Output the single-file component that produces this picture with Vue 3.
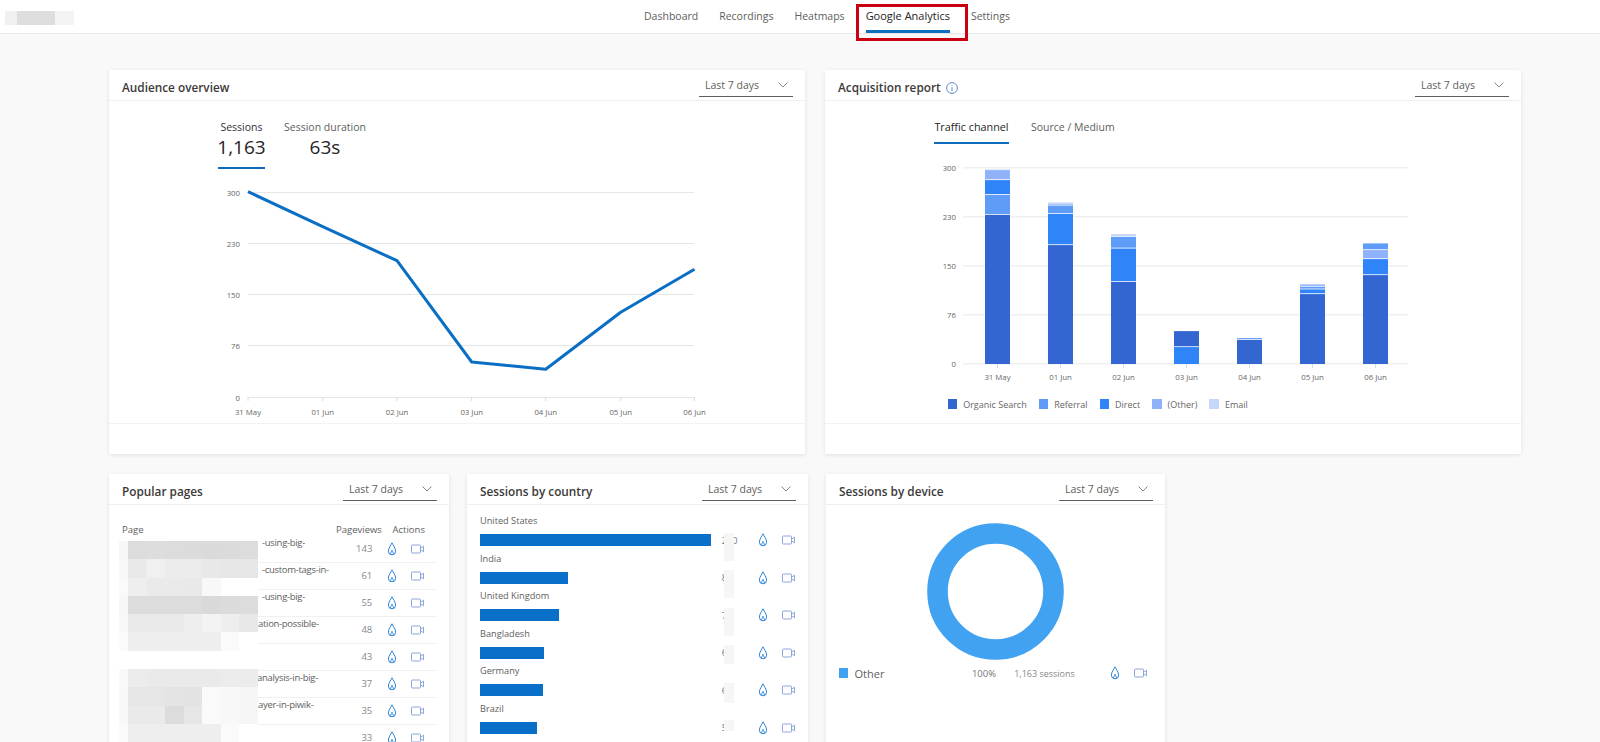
<template>
  <div class="page">
    <!-- shared action icons -->
    <svg class="icon-defs" width="0" height="0">
      <symbol id="flame" viewBox="0 0 10 14">
        <path d="M5 .8C4.2 3 1.4 5.8 1.4 9.2a3.6 3.6 0 0 0 7.2 0C8.6 5.8 5.8 3 5 .8z" fill="none" stroke="#2b84d6" stroke-width="1" />
        <path d="M3.6 12.3c-.5-1.6 1.2-2.2 1.4-4 .2 1.8 1.9 2.4 1.4 4" fill="none" stroke="#2b84d6" stroke-width="1" />
      </symbol>
      <symbol id="camera" viewBox="0 0 13 10">
        <rect x="0.5" y="1" width="9" height="8" rx="0.8" fill="none" stroke="#8ea6dc" stroke-width="1" />
        <path d="M9.5 4.3L12.5 2.2V7.8L9.5 5.7" fill="none" stroke="#8ea6dc" stroke-width="1" />
      </symbol>
    </svg>

    <header class="top-bar">
      <div class="logo-blur"><i></i><i></i><i></i></div>
      <nav class="top-nav">
        <a v-for="item in navItems" :key="item" class="nav-item" :class="{ active: item === 'Google Analytics' }">{{ item }}</a>
      </nav>
    </header>

    <main class="dashboard">
      <section class="row-top">
        <div class="card tall">
          <div class="card-head">
            <h2>Audience overview</h2>
            <div class="range"><span>Last 7 days</span><svg width="10" height="6" viewBox="0 0 10 6"><path d="M.5.5L5 5 9.5.5" fill="none" stroke="#8a8886" /></svg></div>
          </div>
          <div class="metric-tabs">
            <div class="metric active"><span>Sessions</span><strong>1,163</strong></div>
            <div class="metric wide"><span>Session duration</span><strong>63s</strong></div>
          </div>
          <svg class="chart" width="696" height="254" viewBox="109 169 696 254">
            <g v-for="g in lineGrid" :key="g.label">
              <line x1="248" :x2="694" :y1="g.y" :y2="g.y" stroke="#e6e6e6" />
              <text x="240" :y="g.y + 3" text-anchor="end" class="axis">{{ g.label }}</text>
            </g>
            <g v-for="(p, i) in linePoints" :key="i">
              <line :x1="p.x" :x2="p.x" y1="397" y2="401" stroke="#dcdcdc" />
              <text :x="p.x" y="415" text-anchor="middle" class="axis">{{ days[i] }}</text>
            </g>
            <polyline :points="linePath" fill="none" stroke="#0a6fc4" stroke-width="3" stroke-linejoin="round" />
          </svg>
          <div class="card-foot"></div>
        </div>

        <div class="card tall">
          <div class="card-head">
            <h2>Acquisition report
              <svg class="info" width="12" height="12" viewBox="0 0 12 12">
                <circle cx="6" cy="6" r="5.4" fill="none" stroke="#5f86cf" />
                <path d="M6 5.2V9M6 3.2v1" fill="none" stroke="#5f86cf" />
              </svg>
            </h2>
            <div class="range"><span>Last 7 days</span><svg width="10" height="6" viewBox="0 0 10 6"><path d="M.5.5L5 5 9.5.5" fill="none" stroke="#8a8886" /></svg></div>
          </div>
          <div class="channel-tabs">
            <span class="channel active">Traffic channel</span>
            <span class="channel">Source / Medium</span>
          </div>
          <svg class="chart" width="696" height="246" viewBox="825 146 696 246">
            <g v-for="g in barGrid" :key="g.label">
              <line x1="963" x2="1408" :y1="g.y" :y2="g.y" stroke="#f0f0f0" stroke-width="1.5" />
              <text x="956" :y="g.y + 3" text-anchor="end" class="axis">{{ g.label }}</text>
            </g>
            <g v-for="(bar, i) in stackedBars" :key="i">
              <rect v-for="(seg, j) in bar" :key="j" :x="985 + i * 63" :y="seg.y" width="25" :height="seg.h" :fill="seg.color" />
              <line :x1="997.5 + i * 63" :x2="997.5 + i * 63" y1="364" y2="368" stroke="#dcdcdc" />
              <text :x="997.5 + i * 63" y="380" text-anchor="middle" class="axis">{{ days[i] }}</text>
            </g>
          </svg>
          <div class="legend">
            <div v-for="l in legend" :key="l.name" class="legend-item">
              <i :style="{ background: l.color }"></i>{{ l.name }}
            </div>
          </div>
          <div class="card-foot"></div>
        </div>
      </section>

      <section class="row-bottom">
        <div class="card cut">
          <div class="card-head">
            <h2>Popular pages</h2>
            <div class="range"><span>Last 7 days</span><svg width="10" height="6" viewBox="0 0 10 6"><path d="M.5.5L5 5 9.5.5" fill="none" stroke="#8a8886" /></svg></div>
          </div>
          <div class="pages">
            <div class="pages-head">
              <span class="page-col">Page</span>
              <span class="views-col">Pageviews</span>
              <span class="actions-col">Actions</span>
            </div>
            <div v-for="(row, i) in pageRows" :key="i" class="page-row">
              <span class="page-col slug" :style="{ paddingLeft: row.pad + 'px' }">{{ row.slug }}</span>
              <span class="count">{{ row.views }}</span>
              <svg class="flame"><use href="#flame" /></svg>
              <svg class="camera"><use href="#camera" /></svg>
            </div>
            <!-- pixelated block hiding the page urls -->
            <div class="mosaic">
              <div v-for="(cells, r) in mosaic" :key="r" class="mosaic-row">
                <i v-for="(c, k) in cells" :key="k" :style="{ background: '#' + c }"></i>
              </div>
            </div>
          </div>
        </div>

        <div class="card cut">
          <div class="card-head">
            <h2>Sessions by country</h2>
            <div class="range"><span>Last 7 days</span><svg width="10" height="6" viewBox="0 0 10 6"><path d="M.5.5L5 5 9.5.5" fill="none" stroke="#8a8886" /></svg></div>
          </div>
          <div class="countries">
            <div v-for="c in countries" :key="c.name" class="country">
              <div class="country-name">{{ c.name }}</div>
              <div class="country-line">
                <div class="track"><div class="fill" :style="{ width: c.width + 'px' }"></div></div>
                <span class="country-val">{{ c.value }}<i class="val-mask" :style="{ height: c.mask + 'px' }"></i></span>
                <svg class="flame"><use href="#flame" /></svg>
                <svg class="camera"><use href="#camera" /></svg>
              </div>
            </div>
          </div>
        </div>

        <div class="card cut">
          <div class="card-head">
            <h2>Sessions by device</h2>
            <div class="range"><span>Last 7 days</span><svg width="10" height="6" viewBox="0 0 10 6"><path d="M.5.5L5 5 9.5.5" fill="none" stroke="#8a8886" /></svg></div>
          </div>
          <div class="device">
            <svg class="donut" width="137" height="137" viewBox="0 0 137 137">
              <circle cx="68.5" cy="68.5" r="58" fill="none" stroke="#41a2f2" stroke-width="20.6" />
            </svg>
            <div class="device-row">
              <i class="device-swatch"></i>
              <span class="device-name">Other</span>
              <span class="device-pct">100%</span>
              <span class="device-count">1,163 sessions</span>
              <svg class="flame"><use href="#flame" /></svg>
              <svg class="camera"><use href="#camera" /></svg>
            </div>
          </div>
        </div>
      </section>
    </main>
  </div>
</template>

<script setup>
const navItems = ['Dashboard', 'Recordings', 'Heatmaps', 'Google Analytics', 'Settings']
const days = ['31 May', '01 Jun', '02 Jun', '03 Jun', '04 Jun', '05 Jun', '06 Jun']

const lineGrid = [
  { label: '300', y: 192.5 },
  { label: '230', y: 243.5 },
  { label: '150', y: 294.5 },
  { label: '76', y: 345.5 },
  { label: '0', y: 397.5 }
]
const linePoints = [
  { x: 248, y: 191.7 },
  { x: 322.7, y: 226.7 },
  { x: 397, y: 260.7 },
  { x: 471.7, y: 362 },
  { x: 545.7, y: 369.3 },
  { x: 620.7, y: 312.3 },
  { x: 694.5, y: 269.3 }
]
const linePath = linePoints.map(p => `${p.x},${p.y}`).join(' ')

const barGrid = [
  { label: '300', y: 167.7 },
  { label: '230', y: 216.7 },
  { label: '150', y: 265.7 },
  { label: '76', y: 314.7 },
  { label: '0', y: 363.7 }
]

const colors = {
  organic: '#3366d1',
  referral: '#5e9cf7',
  direct: '#2f84f7',
  other: '#8fb2fa',
  email: '#c5d8fa'
}

// segment heights in px, from the bottom of the bar upward
const barData = [
  [['organic', 150], ['referral', 20], ['direct', 14.7], ['other', 10], ['email', 1]],
  [['organic', 119.7], ['direct', 31.3], ['referral', 8.3], ['other', 2], ['email', 1.4]],
  [['organic', 83], ['direct', 33.3], ['referral', 11.7], ['email', 2.7]],
  [['direct', 17.7], ['organic', 16]],
  [['organic', 25], ['referral', 1.7]],
  [['organic', 70.7], ['direct', 4.7], ['referral', 2.7], ['other', 2.3]],
  [['organic', 89.7], ['direct', 16], ['other', 9], ['referral', 6.7]]
]
const stackedBars = barData.map(segs => {
  let y = 364
  return segs.map(([key, h]) => {
    y -= h
    return { y: y + 0.8, h: Math.max(h - 0.8, 0.5), color: colors[key] }
  })
})

const legend = [
  { name: 'Organic Search', color: colors.organic },
  { name: 'Referral', color: colors.referral },
  { name: 'Direct', color: colors.direct },
  { name: '(Other)', color: colors.other },
  { name: 'Email', color: colors.email }
]

const pageRows = [
  { slug: '-using-big-', views: 143, pad: 140 },
  { slug: '-custom-tags-in-', views: 61, pad: 140 },
  { slug: '-using-big-', views: 55, pad: 140 },
  { slug: 'ation-possible-', views: 48, pad: 136 },
  { slug: '', views: 43, pad: 0 },
  { slug: 'analysis-in-big-', views: 37, pad: 135 },
  { slug: 'ayer-in-piwik-', views: 35, pad: 136 },
  { slug: '', views: 33, pad: 0 }
]

const mosaic = [
  ['f7f7f7', 'dcdcdc', 'dddddd', 'dcdcdc', 'dbdbdb', 'dadada', 'dbdbdb', 'dcdcdc'],
  ['f8f8f8', 'e9e9e9', 'f0f0f0', 'ececec', 'ececec', 'e8e8e8', 'e6e6e6', 'e6e6e6'],
  ['fafafa', 'eeeeee', 'eaeaea', 'eaeaea', 'e9e9e9', 'f8f8f8', 'ffffff', 'ffffff'],
  ['f7f7f7', 'dcdcdc', 'dcdcdc', 'dcdcdc', 'dcdcdc', 'd9d9d9', 'dbdbdb', 'dcdcdc'],
  ['f8f8f8', 'eaeaea', 'eaeaea', 'eaeaea', 'eeeeee', 'f3f3f3', 'eeeeee', 'e8e8e8'],
  ['fbfbfb', 'eeeeee', 'eeeeee', 'eeeeee', 'eeeeee', 'eeeeee', 'fafafa', 'ffffff'],
  ['ffffff', 'ffffff', 'ffffff', 'ffffff', 'ffffff', 'ffffff', 'ffffff', 'ffffff'],
  ['f9f9f9', 'ececec', 'eaeaea', 'eaeaea', 'eaeaea', 'eaeaea', 'ececec', 'ececec'],
  ['f8f8f8', 'e6e6e6', 'e6e6e6', 'e4e4e4', 'e3e3e3', 'fafafa', 'f8f8f8', 'f6f6f6'],
  ['f8f8f8', 'eaeaea', 'eaeaea', 'dcdcdc', 'e6e6e6', 'fafafa', 'f8f8f8', 'f6f6f6'],
  ['fbfbfb', 'eeeeee', 'eeeeee', 'eeeeee', 'eeeeee', 'eeeeee', 'fafafa', 'ffffff']
]

const countries = [
  { name: 'United States', width: 231.4, value: '270', mask: 28 },
  { name: 'India', width: 88, value: '8', mask: 28 },
  { name: 'United Kingdom', width: 79.3, value: '7', mask: 28 },
  { name: 'Bangladesh', width: 63.6, value: '6', mask: 19 },
  { name: 'Germany', width: 62.7, value: '6', mask: 20 },
  { name: 'Brazil', width: 57, value: '5', mask: 11 }
]
</script>

<style scoped>
.page {
  min-height: 742px;
  background: #f9f9f9;
  font-family: "Open Sans", "Liberation Sans", sans-serif;
  color: #605e5c;
}

.icon-defs {
  position: absolute;
}

.top-bar {
  display: flex;
  align-items: stretch;
  height: 33px;
  background: #fff;
  border-bottom: 1px solid #e8e8e8;
}

.logo-blur {
  display: flex;
  height: 14px;
  margin: 11px 0 0 5px;
  width: 69px;
}

.logo-blur i {
  background: #f0f0f0;
  width: 12px;
}

.logo-blur i:nth-child(2) {
  background: #dedede;
  width: 38px;
}

.logo-blur i:nth-child(3) {
  background: #f4f4f4;
  width: 19px;
}

.top-nav {
  display: flex;
  gap: 21px;
  margin-left: 570px;
}

.nav-item {
  position: relative;
  font-size: 10.5px;
  line-height: 32px;
  color: #605e5c;
}

.nav-item.active {
  color: #252423;
  font-size: 11px;
}

/* blue tab underline */
.nav-item.active::before {
  content: '';
  position: absolute;
  left: 0;
  right: 0;
  top: 30px;
  height: 3px;
  background: #106ebe;
}

/* red annotation box around the active tab */
.nav-item.active::after {
  content: '';
  position: absolute;
  left: -10px;
  right: -18px;
  top: 4px;
  height: 37px;
  border: 3px solid #c8000f;
  box-sizing: border-box;
}

.dashboard {
  padding: 36px 0 0 109px;
}

.row-top {
  display: grid;
  grid-template-columns: 696px 696px;
  gap: 20px;
}

.row-bottom {
  display: grid;
  grid-template-columns: 340px 341px 339px;
  gap: 18px;
  margin-top: 20px;
}

.card {
  display: flex;
  flex-direction: column;
  background: #fff;
  box-shadow: 0 1px 4px rgba(0, 0, 0, 0.1);
}

.tall {
  height: 384px;
}

.cut {
  height: 300px;
  overflow: hidden;
}

.card-head {
  display: flex;
  justify-content: space-between;
  align-items: flex-start;
  height: 30px;
  flex: none;
  padding: 0 12px 0 13px;
  border-bottom: 1px solid #efefef;
}

.card-head h2 {
  display: flex;
  align-items: center;
  gap: 5px;
  margin: 0;
  font-size: 11.8px;
  font-weight: 600;
  line-height: 34px;
  color: #3b3a39;
}

.info {
  margin-top: 1px;
}

.range {
  display: flex;
  justify-content: space-between;
  align-items: center;
  width: 94px;
  height: 27px;
  box-sizing: border-box;
  padding: 3px 5px 0 6px;
  border-bottom: 1px solid #605e5c;
  font-size: 10.5px;
}

.metric-tabs {
  display: flex;
  gap: 20px;
  height: 68px;
  padding: 18px 0 0 109px;
  box-sizing: border-box;
}

.metric {
  display: flex;
  flex-direction: column;
  align-items: center;
  width: 47px;
  height: 50px;
  box-sizing: border-box;
  font-size: 10.5px;
  line-height: 16px;
  white-space: nowrap;
}

.metric.wide {
  width: 80px;
}

.metric.active {
  border-bottom: 2px solid #0f6cbd;
  color: #323130;
}

.metric strong {
  font-size: 19px;
  font-weight: 400;
  line-height: 24px;
  color: #252423;
}

.chart {
  display: block;
  flex: none;
}

.axis {
  font-size: 7.8px;
  fill: #666;
}

.card-foot {
  margin-top: auto;
  height: 30px;
  flex: none;
  border-top: 1px solid #f3f3f3;
}

.channel-tabs {
  display: flex;
  gap: 20px;
  height: 45px;
  padding: 18px 0 0 109px;
  box-sizing: border-box;
  font-size: 10.5px;
  line-height: 16px;
}

.channel {
  height: 25px;
  padding: 0 2px;
  box-sizing: border-box;
  white-space: nowrap;
}

.channel.active {
  width: 75px;
  text-align: center;
  padding: 0;
  color: #252423;
  font-size: 10.8px;
  border-bottom: 2px solid #0f6cbd;
}

.legend {
  display: flex;
  gap: 12px;
  height: 24px;
  padding-left: 122.7px;
  align-items: center;
  font-size: 9px;
  color: #666;
}

.legend-item {
  display: flex;
  align-items: center;
  gap: 6px;
}

.legend-item i {
  width: 9.5px;
  height: 9.5px;
}

.flame {
  flex: none;
  width: 10px;
  height: 14px;
}

.camera {
  flex: none;
  width: 13px;
  height: 10px;
  margin-left: 14px;
}

.pages {
  position: relative;
  padding: 18px 12px 0 13px;
  font-size: 9.5px;
}

.pages-head {
  display: flex;
  height: 12.5px;
  line-height: 14px;
}

.page-col {
  flex: 1;
  white-space: nowrap;
}

.views-col {
  width: 44px;
}

.actions-col {
  width: 44.5px;
  margin-left: 12.5px;
  white-space: nowrap;
}

.page-row {
  display: flex;
  align-items: center;
  height: 27px;
  box-sizing: border-box;
  border-bottom: 1px solid #f0f0f0;
}

.page-row .camera {
  margin-right: 12.7px;
}

.slug {
  align-self: flex-start;
  line-height: 13px;
  letter-spacing: -0.3px;
}

.count {
  width: 36px;
  text-align: right;
  margin-right: 15px;
  color: #888;
}

.mosaic {
  position: absolute;
  left: 10px;
  top: 36px;
}

.mosaic-row {
  display: flex;
  height: 18.3px;
}

.mosaic-row i {
  width: 18.5px;
}

.mosaic-row i:first-child {
  width: 9px;
}

.countries {
  padding: 8px 12px 0 13px;
  font-size: 9.2px;
}

.country {
  height: 37.5px;
}

.country-name {
  line-height: 16px;
}

.country-line {
  display: flex;
  align-items: center;
  height: 12px;
  margin-top: 5px;
}

.track {
  width: 241.7px;
  flex: none;
}

.fill {
  height: 12px;
  background: #0a6fc9;
}

.country-val {
  position: relative;
  width: 36px;
  flex: none;
  color: #777;
}

.val-mask {
  position: absolute;
  left: 2.5px;
  top: -1px;
  width: 9.5px;
  background: #f6f6f6;
}

.device {
  display: flex;
  flex-direction: column;
  font-size: 10.5px;
}

.donut {
  align-self: center;
  margin-top: 18px;
}

.device-row {
  display: flex;
  align-items: center;
  height: 18px;
  margin-top: 4px;
  padding-left: 12.7px;
}

.device-swatch {
  width: 9.5px;
  height: 9.5px;
  background: #41a2f2;
  margin-right: 6.3px;
}

.device-name {
  width: 117.4px;
  font-size: 11px;
}

.device-pct {
  width: 42.3px;
  font-size: 9.5px;
  color: #777;
}

.device-count {
  width: 95.7px;
  font-size: 9px;
  color: #8a8886;
}
</style>

<style>
html,
body {
  margin: 0;
  height: 100%;
  overflow: hidden;
  background: #f9f9f9;
}
</style>
